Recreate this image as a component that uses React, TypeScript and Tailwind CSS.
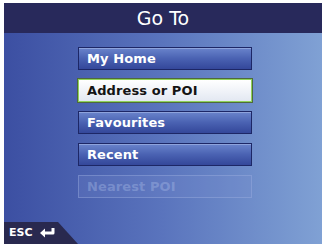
import type { ReactNode } from "react";

function MenuButton({ children, variant = "normal" }: { children: ReactNode; variant?: "normal" | "selected" | "disabled" }) {
  const styles = {
    normal: "border-[#1d2766] bg-gradient-to-b from-[#6a84cc] via-[#4a62b2] to-[#34479a] text-white shadow-[inset_0_1px_0_#8ea3dc]",
    selected: "border-[#8fd35a] bg-gradient-to-b from-white to-[#e3e8f2] text-[#141414] outline outline-1 outline-[#4e6a3a]",
    disabled: "border-[#9fb2e0]/40 bg-[#7b93d0]/20 text-[#a0b3e2]/45",
  }[variant];
  return (
    <div className={`flex h-[23px] w-[174px] items-center border pl-[8px] text-[13px] font-bold tracking-[0.1px] ${styles}`}>
      {children}
    </div>
  );
}

export default function App() {
  return (
    <div className="h-[248px] w-[326px] bg-white pl-[4px] pr-[4px] pt-[3px] pb-[4px]" style={{ fontFamily: "Tahoma, 'DejaVu Sans', 'Liberation Sans', sans-serif" }}>
      <div className="flex h-full w-full flex-col">
        <div className="flex h-[30px] items-center justify-center bg-[#28295b] text-[19px] text-white">Go To</div>
        <div className="relative flex flex-1 flex-col items-center gap-[9px] bg-gradient-to-r from-[#3c4fa2] via-[#5a74bd] to-[#80a1d4] pt-[14px] pl-[4px]">
          <MenuButton>My Home</MenuButton>
          <MenuButton variant="selected">Address or POI</MenuButton>
          <MenuButton>Favourites</MenuButton>
          <MenuButton>Recent</MenuButton>
          <MenuButton variant="disabled">Nearest POI</MenuButton>
          <div className="absolute bottom-0 left-0 flex h-[22px] w-[74px] items-center gap-[6px] bg-[#29294f] pl-[5px] text-[11px] font-bold text-white [clip-path:polygon(0_0,54px_0,100%_100%,0_100%)]">
            <span>ESC</span>
            <svg width="17" height="12" viewBox="0 0 17 12">
              <path d="M14 1v5H5" fill="none" stroke="white" strokeWidth="3" strokeLinejoin="round" />
              <path d="M1 6l5-4.5v9z" fill="white" />
            </svg>
          </div>
        </div>
      </div>
    </div>
  );
}
